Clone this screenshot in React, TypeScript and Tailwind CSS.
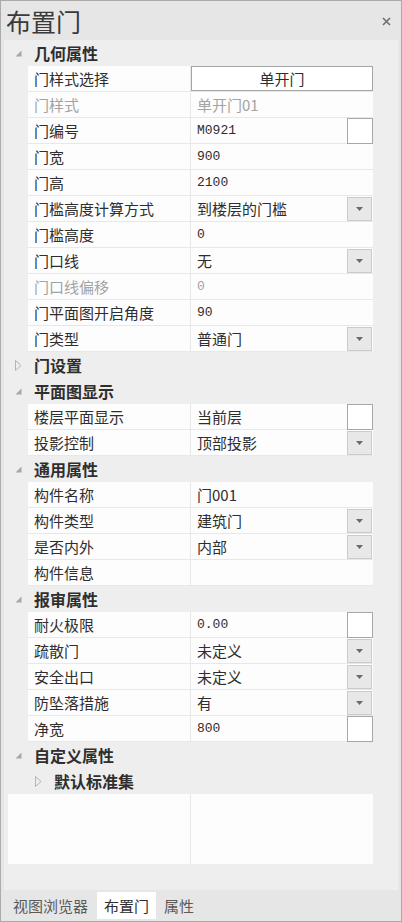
import React from "react";

type Kind = "text" | "box" | "drop" | "button";

type Row = { label: string; value?: string; kind?: Kind; disabled?: boolean; mono?: boolean };

type Section = { title: string; open: boolean; rows: Row[] };

const sections: Section[] = [
  {
    title: "几何属性",
    open: true,
    rows: [
      { label: "门样式选择", value: "单开门", kind: "button" },
      { label: "门样式", value: "单开门01", disabled: true },
      { label: "门编号", value: "M0921", kind: "box", mono: true },
      { label: "门宽", value: "900", mono: true },
      { label: "门高", value: "2100", mono: true },
      { label: "门槛高度计算方式", value: "到楼层的门槛", kind: "drop" },
      { label: "门槛高度", value: "0", mono: true },
      { label: "门口线", value: "无", kind: "drop" },
      { label: "门口线偏移", value: "0", disabled: true, mono: true },
      { label: "门平面图开启角度", value: "90", mono: true },
      { label: "门类型", value: "普通门", kind: "drop" },
    ],
  },
  { title: "门设置", open: false, rows: [] },
  {
    title: "平面图显示",
    open: true,
    rows: [
      { label: "楼层平面显示", value: "当前层", kind: "box" },
      { label: "投影控制", value: "顶部投影", kind: "drop" },
    ],
  },
  {
    title: "通用属性",
    open: true,
    rows: [
      { label: "构件名称", value: "门001" },
      { label: "构件类型", value: "建筑门", kind: "drop" },
      { label: "是否内外", value: "内部", kind: "drop" },
      { label: "构件信息", value: "" },
    ],
  },
  {
    title: "报审属性",
    open: true,
    rows: [
      { label: "耐火极限", value: "0.00", kind: "box", mono: true },
      { label: "疏散门", value: "未定义", kind: "drop" },
      { label: "安全出口", value: "未定义", kind: "drop" },
      { label: "防坠落措施", value: "有", kind: "drop" },
      { label: "净宽", value: "800", kind: "box", mono: true },
    ],
  },
];

const cjk = "font-['Noto_Sans_CJK_SC',sans-serif]";
const mono = "font-['Liberation_Mono','Noto_Sans_CJK_SC',monospace]";

const OpenArrow = () => (
  <svg width="7" height="7" viewBox="0 0 7 7" className="shrink-0">
    <polygon points="6.5,0.5 6.5,6.5 0.5,6.5" fill="#a8a8a8" />
  </svg>
);

const ClosedArrow = () => (
  <svg width="7" height="11" viewBox="0 0 7 11" className="shrink-0">
    <polygon points="0.5,0.5 6,5.5 0.5,10.5" fill="none" stroke="#b4b4b4" strokeWidth="1" />
  </svg>
);

const Header = ({ title, open }: { title: string; open: boolean }) => (
  <div className="flex h-[26px] items-center">
    <div className="flex w-[30px] justify-start pl-[11px]">{open ? <OpenArrow /> : <ClosedArrow />}</div>
    <span className="text-[16px] font-bold leading-none text-[#2e2e2e]">{title}</span>
  </div>
);

const PropRow = ({ row }: { row: Row }) => {
  const color = row.disabled ? "text-[#a3a3a3]" : "text-[#2e2e2e]";
  return (
    <div className="flex h-[26px] pl-[24px]">
      <div className="flex w-[345px] border-b border-[#e8e8e8] bg-[#fdfdfd]">
        <div className={`flex w-[162px] items-center pl-[6px] text-[15px] leading-none ${color}`}>{row.label}</div>
        <div className="w-px bg-[#e8e8e8]" />
        {row.kind === "button" ? (
          <div className="flex flex-1 items-center justify-center border border-[#a5a5a5] bg-white text-[15px] leading-none text-[#2e2e2e]">
            {row.value}
          </div>
        ) : (
          <div className="flex flex-1 items-center">
            <span className={`flex-1 pl-[6px] leading-none ${color} ${row.mono ? `${mono} text-[13px]` : "text-[15px]"}`}>
              {row.value}
            </span>
            {row.kind === "box" && <div className="h-[26px] w-[26px] self-start border border-[#a8a8a8] bg-white" />}
            {row.kind === "drop" && (
              <div className="mr-px flex h-[24px] w-[25px] items-center justify-center border border-[#cbcbcb] bg-[#e8e8e8]">
                <svg width="7" height="4" viewBox="0 0 7 4">
                  <polygon points="0,0 7,0 3.5,4" fill="#6a6a6a" />
                </svg>
              </div>
            )}
          </div>
        )}
      </div>
    </div>
  );
};

export default function App() {
  return (
    <div className={`flex h-[922px] w-[402px] flex-col border border-[#ababab] bg-[#e6e6e6] ${cjk}`}>
      <div className="flex h-[39px] items-center justify-between pl-[5px] pr-[10px]">
        <span className="pt-[2px] text-[25px] leading-none text-[#3a3a3a]">布置门</span>
        <svg width="9" height="9" viewBox="0 0 9 9" className="mt-[2px]">
          <path d="M1 1 L8 8 M8 1 L1 8" stroke="#6e6e6e" strokeWidth="1.6" />
        </svg>
      </div>

      <div className="mx-[3px] flex h-[850px] flex-col bg-[#eeeeee]">
        {sections.map((s) => (
          <div key={s.title}>
            <Header title={s.title} open={s.open} />
            {s.rows.map((r) => (
              <PropRow key={r.label} row={r} />
            ))}
          </div>
        ))}

        <Header title="自定义属性" open />
        <div className="flex h-[26px] items-center">
          <div className="w-[50px] pl-[31px]">
            <ClosedArrow />
          </div>
          <span className="text-[16px] font-bold leading-none text-[#2e2e2e]">默认标准集</span>
        </div>

        <div className="ml-[4px] flex h-[70px] w-[365px] bg-[#fdfdfd]">
          <div className="w-[182px]" />
          <div className="w-px bg-[#e8e8e8]" />
          <div className="flex-1" />
        </div>
      </div>

      <div className="flex h-[31px] items-center gap-0 pl-[3px] text-[15px] leading-none">
        <div className="flex h-[27px] items-center px-[9px] text-[#5a5a5a]">视图浏览器</div>
        <div className="flex h-[27px] items-center bg-white px-[7px] text-[#2e2e2e]">布置门</div>
        <div className="flex h-[27px] items-center px-[8px] text-[#5a5a5a]">属性</div>
      </div>
    </div>
  );
}
